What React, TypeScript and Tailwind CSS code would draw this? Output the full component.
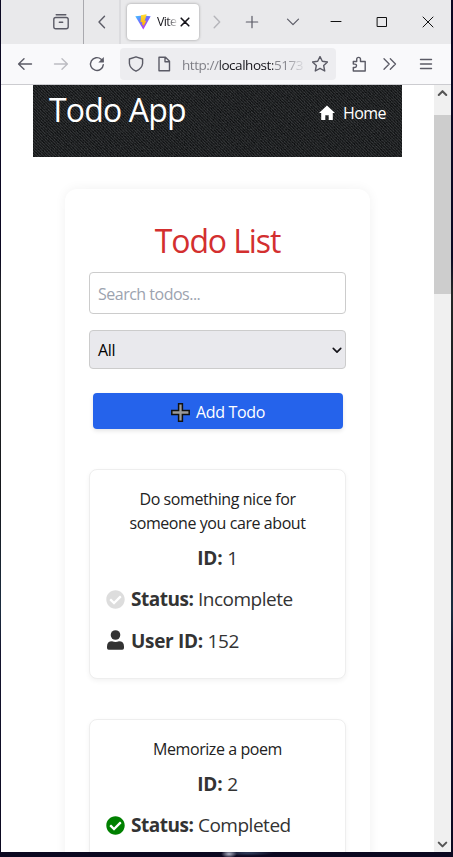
import type { ReactNode } from "react";
import { FaCheckCircle } from "react-icons/fa";

const line = { fill: "none", stroke: "#5b5b66", strokeWidth: 1.4, strokeLinecap: "round", strokeLinejoin: "round" } as const;

function Glyph({ d, className = "", size = 16, color = "#5b5b66", width = 1.4 }: { d: string; className?: string; size?: number; color?: string; width?: number }) {
  return (
    <svg className={`shrink-0 ${className}`} width={size} height={size} viewBox="0 0 16 16" {...line} stroke={color} strokeWidth={width}>
      <path d={d} />
    </svg>
  );
}

function ViteLogo() {
  return (
    <svg className="shrink-0" width="16" height="16" viewBox="0 0 16 16">
      <defs>
        <linearGradient id="vite" x1="0" y1="0" x2="0.6" y2="1">
          <stop offset="0" stopColor="#41c8ff" />
          <stop offset="0.5" stopColor="#6f6cff" />
          <stop offset="1" stopColor="#bd34fe" />
        </linearGradient>
        <linearGradient id="bolt" x1="0" y1="0" x2="0" y2="1">
          <stop offset="0" stopColor="#ffdd35" />
          <stop offset="1" stopColor="#ffa800" />
        </linearGradient>
      </defs>
      <path d="M0.3 2.2 L8 1.4 L15.7 2.2 L8.3 15.5 Z" fill="url(#vite)" />
      <path d="M11.3 0.3 L6 1.3 L5.5 8.3 L7.3 7.9 L7 11 L8.4 10.5 L8.1 13.2 L11.5 6.6 L9.7 7 L11.6 0.4 Z" fill="url(#bolt)" />
    </svg>
  );
}

function TabBar() {
  return (
    <div className="flex h-[44px] items-center bg-[#e9e9eb]">
      <div className="flex h-full w-[83px] items-center border-r border-[#a9a9ae] pl-[52px]">
        <Glyph d="M3.2 .8h9.6M2.8 3.5h10.4q2 0 2 2v7.2q0 2-2 2H2.8q-2 0-2-2V5.5q0-2 2-2zM6.3 8.2h3.4" />
      </div>
      <div className="flex h-full w-[37px] items-center border-r-2 border-[#dcdcdf] pl-[10px]">
        <Glyph d="M10.5 2.2L5 8l5.500 5.800" />
      </div>
      <div className="ml-[6px] flex h-[36px] w-[72px] items-center rounded-[4px] bg-white pl-[8px] shadow-[0_0_3px_rgba(0,0,0,0.35)]">
        <ViteLogo />
        <span className="ml-[6px] w-[20px] overflow-hidden whitespace-nowrap bg-gradient-to-r from-[#15141a] from-50% to-[#15141a]/10 bg-clip-text text-[12.500px] tracking-[-0.700px] text-transparent">Vite</span>
        <Glyph d="M4.200 4.200l7.600 7.600M11.800 4.200l-7.600 7.600" color="#15141a" width={1.6} />
      </div>
      <Glyph className="ml-[10px]" d="M5.200 2.200L10.700 8l-5.500 5.800" color="#b5b5ba" />
      <Glyph className="ml-[19px]" d="M8 2.300v11.400M2.300 8h11.400" width={1.2} />
      <Glyph className="ml-[25px]" d="M2.500 5.200L8 10.700l5.500-5.500" width={1.2} />
      <Glyph className="ml-[27px]" d="M3 7.500h10" color="#111" width={1} />
      <Glyph className="ml-[30px]" d="M3.500 3.500h9v9h-9z" color="#111" width={1} />
      <Glyph className="ml-[30px]" d="M3 3l10 10M13 3L3 13" color="#111" width={1} />
    </div>
  );
}

function ToolBar() {
  return (
    <div className="flex h-[41px] items-center border-b border-[#ccccd0] bg-[#f9f9fb] pl-[16px]">
      <Glyph d="M14.500 8H1.800M7 2.800L1.600 8 7 13.200" />
      <Glyph className="ml-[20px]" d="M1.500 8h12.700M9 2.800L14.400 8 9 13.200" color="#bcbcc2" />
      <svg className="ml-[20px] shrink-0" width="16" height="16" viewBox="0 0 16 16" {...line}>
        <path d="M14.300 8.600A6.400 6.400 0 1 1 12.200 3.300L14 5" />
        <path d="M14.800 1v5.500H9.300z" fill="#5b5b66" stroke="none" />
      </svg>
      <div className="ml-[15px] flex h-[32px] w-[216px] items-center rounded-[4px] bg-[#ededf0] pl-[8px]">
        <Glyph d="M8 .8L14.600 3v4.500q-.5 5-6.600 7.700Q1.900 12.500 1.400 7.500V3z" />
        <Glyph className="ml-[12px]" d="M3 1.300h6.500l4 4v9.400H3zM9 1.500v4.300h4.300" />
        <span className="ml-[10px] w-[124px] overflow-hidden whitespace-nowrap bg-[linear-gradient(90deg,#7b7b82_38px,#15141a_38px,#15141a_91px,#85858c_91px,#85858c_103px,#85858c20_122px)] bg-clip-text pt-[2px] text-[13.500px] tracking-[-0.450px] text-transparent">
          http://localhost:5173
        </span>
        <Glyph className="ml-[6px]" d="M8 .5l2.300 4.800 5.200 .7-3.800 3.600 1 5.400L8 12.400l-4.700 2.600 1-5.400L.5 6l5.200-.7z" />
      </div>
      <Glyph className="ml-[15px]" d="M2.300 5.500h3.400V3.300a1.900 1.900 0 0 1 3.800 0v2.200h4.700v9.500H2.300v-3.500h1.500a1.700 1.700 0 0 0 0-3.400H2.300z" />
      <Glyph className="ml-[15px]" d="M2 2.800L7.200 8 2 13.200M8.300 2.800L13.500 8l-5.200 5.200" width={1.3} />
      <Glyph className="ml-[20px]" d="M2.500 3.500h11M2.500 8h11M2.500 12.500h11" />
    </div>
  );
}

function DenimTexture() {
  return (
    <svg className="absolute inset-0" width="369" height="72">
      <defs>
        <filter id="grain" x="0" y="0" width="100%" height="100%" colorInterpolationFilters="sRGB">
          <feTurbulence type="fractalNoise" baseFrequency="0.7" numOctaves="2" seed="4" />
          <feColorMatrix values="0.22 0 0 0 0.015  0.22 0 0 0 0.022  0.22 0 0 0 0.028  0 0 0 0 1" />
        </filter>
        <pattern id="weave" width="3" height="3" patternUnits="userSpaceOnUse">
          <path d="M0 0h1v1H0zM1 1h1v1H1zM2 2h1v1H2z" fill="#585c5e" fillOpacity="0.25" />
          <path d="M1 0h1v1H1zM2 1h1v1H2zM0 2h1v1H0z" fill="#000" fillOpacity="0.25" />
        </pattern>
      </defs>
      <rect width="369" height="72" filter="url(#grain)" />
      <rect width="369" height="72" fill="url(#weave)" />
    </svg>
  );
}

function HomeIcon() {
  return (
    <svg width="16" height="16" viewBox="0 0 16 16" fill="#fff">
      <path d="M8 .5L0 7.900h2.200V15h4.100v-4.700h3.400V15h4.100V7.900H16z" />
    </svg>
  );
}

function UserIcon() {
  return (
    <svg className="-mt-[2px]" width="19" height="20" viewBox="0 0 19 20" fill="#333">
      <circle cx="9.500" cy="5" r="4.800" />
      <path d="M1 18V16.500Q1 11.300 6 11.300Q9.500 12.800 13 11.300Q18 11.300 18 16.500V18Q18 19.700 16.300 19.700H2.700Q1 19.700 1 18Z" />
    </svg>
  );
}

function Row({ icon, label, value, tracking }: { icon: ReactNode; label: string; value: string; tracking: string }) {
  return (
    <div className="flex h-[28px] items-center text-[19px] leading-[28px] text-[#333]">
      <span className="flex w-[25px] shrink-0">{icon}</span>
      <span className={`whitespace-nowrap ${tracking}`}>
        <b>{label}</b> {value}
      </span>
    </div>
  );
}

type Todo = { id: number; lines: string[]; done: boolean; user?: number };

const todos: Todo[] = [
  { id: 1, lines: ["Do something nice for", "someone you care about"], done: false, user: 152 },
  { id: 2, lines: ["Memorize a poem"], done: true },
];

function TodoCard({ todo }: { todo: Todo }) {
  return (
    <article className="mb-[40px] min-h-[186px] rounded-[8px] border border-[#eee] bg-white px-[16px] pt-[17px] pb-[23px] shadow-[0_2px_5px_rgba(0,0,0,0.05)]">
      <h2 className="text-center text-[16px] leading-[24px] tracking-[-0.420px] text-[#222]">
        {todo.lines.map((t) => (
          <span key={t} className="block whitespace-nowrap">{t}</span>
        ))}
      </h2>
      <p className="mt-[9px] mb-[13px] text-center text-[19px] leading-[28px] tracking-[-0.200px] text-[#333]">
        <b>ID:</b> {todo.id}
      </p>
      <Row icon={<FaCheckCircle size={19} color={todo.done ? "green" : "#ddd"} />} label="Status:" value={todo.done ? "Completed" : "Incomplete"} tracking="tracking-[-0.480px]" />
      {todo.user !== undefined && (
        <div className="mt-[14px]">
          <Row icon={<UserIcon />} label="User ID:" value={String(todo.user)} tracking="tracking-[-0.320px]" />
        </div>
      )}
    </article>
  );
}

function ScrollBar() {
  return (
    <div className="flex w-[17px] shrink-0 flex-col items-center bg-[#f0f0f0]">
      <Glyph className="mt-[1px]" d="M4 9.500l4-4 4 4" size={15} color="#555" width={2.2} />
      <div className="mt-[14px] h-[179px] w-full bg-[#cdcdcd]" />
      <Glyph className="mt-auto" d="M4 6l4 4 4-4" size={15} color="#555" width={2.2} />
    </div>
  );
}

export default function App() {
  return (
    <div className="h-[857px] w-[453px] overflow-hidden bg-[linear-gradient(180deg,#0b0822_0%,#0b0822_30%,#242627_34%,#15171c_58%,#1b2d40_71%,#14142e_76%,#0b0820_100%)] pr-[2px] pl-[1px] font-['Open_Sans','Noto_Sans',sans-serif]">
      <div className="flex h-[852px] flex-col bg-white">
        <TabBar />
        <ToolBar />
        <div className="flex min-h-0 flex-1">
          <main className="flex-1 overflow-hidden px-[32px]">
            <header className="relative flex h-[72px] justify-between bg-[#1d1f21] px-[16px] text-white">
              <DenimTexture />
              <h1 className="relative mt-[5px] text-[32px] leading-[40px] tracking-[-0.850px]">Todo App</h1>
              <a className="relative mt-[16px] flex h-[24px] items-center gap-[8px] text-[16px] tracking-[-0.550px]">
                <HomeIcon />
                <span>Home</span>
              </a>
            </header>
            <section className="mx-[32px] mt-[32px] h-[800px] rounded-[12px] bg-white px-[24px] pt-[31px] shadow-[0_0_12px_rgba(0,0,0,0.06)]">
              <h1 className="pt-px text-center text-[32px] leading-[40px] tracking-[-1.100px] text-[#d32f2f]">Todo List</h1>
              <input className="mt-[11px] block h-[42px] w-full rounded-[4px] border border-[#ccc] px-[8px] pt-[2px] text-[16px] tracking-[-0.500px] placeholder:text-[#9ca3af]" placeholder="Search todos..." />
              <div className="mt-[16px] flex h-[39px] items-center justify-between rounded-[4px] border border-[#ccc] bg-[#e9e9ed] pr-[3px] pl-[8px] text-[16px] text-black">
                <span className="tracking-[-0.300px]">All</span>
                <Glyph d="M2 5.500l6 6 6-6" size={10} color="#15141a" width={2.6} />
              </div>
              <button className="mt-[24px] mr-[3px] ml-[4px] flex h-[36px] w-[250px] items-center justify-center rounded-[4px] bg-[#2563eb] text-[16px] text-white shadow-[0_2px_4px_rgba(0,0,0,0.1)]">
                <svg className="mt-[2px] mr-[6px]" width="19" height="19" viewBox="0 0 19 19">
                  <path d="M7.600 .8h3.800v6.800h6.800v3.800h-6.800v6.800H7.600v-6.800H.8V7.600h6.800z" fill="#9b9b9b" stroke="#111" strokeWidth="1.500" />
                </svg>
                <span className="pt-[2px] tracking-[-0.350px]">Add Todo</span>
              </button>
              <div className="mt-[40px]">
                {todos.map((t) => (
                  <TodoCard key={t.id} todo={t} />
                ))}
              </div>
            </section>
          </main>
          <ScrollBar />
        </div>
      </div>
      <div className="h-[5px] bg-[radial-gradient(ellipse_8px_4px_at_228px_2px,#aeb2c4,transparent),radial-gradient(ellipse_26px_3px_at_247px_1px,#33405e,transparent)]" />
    </div>
  );
}
